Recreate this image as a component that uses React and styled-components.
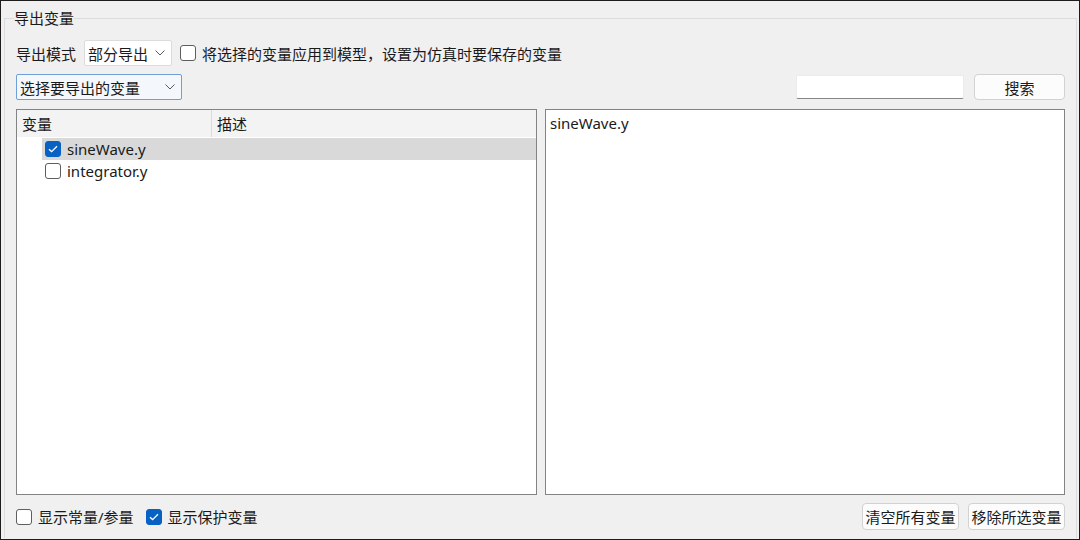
import React from "react";
import styled, { createGlobalStyle } from "styled-components";

const Global = createGlobalStyle`
  html, body { margin: 0; padding: 0; background: #f0f0f0; }
  * { box-sizing: border-box; }
  body {
    font-family: "Segoe UI", "Noto Sans", "Noto Sans CJK SC", sans-serif;
    font-size: 15px;
    color: #1a1a1a;
  }
`;

const Frame = styled.div`
  width: 1080px;
  height: 540px;
  border: 1px solid #1c1c1c;
  background: #f0f0f0;
  padding: 7px 2px 1px 3px;
  display: flex;
`;

const GroupBox = styled.fieldset`
  flex: 1;
  margin: 0;
  border: 1px solid #dcdcdc;
  border-bottom: none;
  padding: 11px 11px 8px 11px;
  display: flex;
  flex-direction: column;
  min-width: 0;
`;

const Legend = styled.legend`
  padding: 0;
  margin-left: -2px;
  line-height: 20px;
  font-size: 15px;
`;

const Row = styled.div`
  display: flex;
  align-items: center;
  height: ${(p) => p.$h || 26}px;
  margin-top: ${(p) => p.$mt || 0}px;
`;

const Label = styled.span`
  white-space: nowrap;
  margin-right: ${(p) => p.$mr || 0}px;
`;

const Combo = styled.div`
  width: ${(p) => p.$w}px;
  height: 26px;
  display: flex;
  align-items: center;
  justify-content: space-between;
  padding: 0 6px 0 3px;
  background: ${(p) => (p.$focus ? "#f4f7fc" : "#ffffff")};
  border: 1px solid ${(p) => (p.$focus ? "#6f9fd8" : "#dcdcdc")};
  border-radius: 2px;
  white-space: nowrap;
`;

const Chevron = () => (
  <svg width="10" height="6" viewBox="0 0 10 6">
    <path d="M0.5 0.5 L5 5 L9.5 0.5" fill="none" stroke="#5a5a5a" strokeWidth="1" />
  </svg>
);

const Box = styled.span`
  width: 16px;
  height: 16px;
  flex: none;
  border-radius: 3px;
  display: inline-flex;
  align-items: center;
  justify-content: center;
  background: ${(p) => (p.$checked ? "#0862c4" : "#ffffff")};
  border: 1px solid ${(p) => (p.$checked ? "#0862c4" : "#5e5e5e")};
`;

const Check = ({ checked }) => (
  <Box $checked={checked}>
    {checked && (
      <svg width="10" height="8" viewBox="0 0 10 8">
        <path d="M1 4.2 L3.6 6.6 L9 1.2" fill="none" stroke="#fff" strokeWidth="1.3" />
      </svg>
    )}
  </Box>
);

const Spacer = styled.div`
  flex: 1;
`;

const SearchInput = styled.div`
  width: 168px;
  height: 24px;
  background: #fff;
  border: 1px solid #ebebeb;
  border-bottom: 1px solid #868686;
  border-radius: 2px;
  margin-right: 10px;
`;

const Button = styled.div`
  width: ${(p) => p.$w}px;
  height: ${(p) => p.$h || 26}px;
  display: flex;
  align-items: center;
  justify-content: center;
  background: #fcfcfc;
  border: 1px solid #d2d2d2;
  border-radius: 4px;
  white-space: nowrap;
  margin-left: ${(p) => p.$ml || 0}px;
`;

const Panels = styled.div`
  flex: 1;
  display: flex;
  gap: 8px;
  margin-top: 9px;
  min-height: 0;
`;

const Panel = styled.div`
  width: ${(p) => p.$w}px;
  background: #fff;
  border: 1px solid #838383;
  display: flex;
  flex-direction: column;
`;

const Header = styled.div`
  height: 27px;
  display: flex;
  background: #f3f3f3;
`;

const HeadCell = styled.div`
  width: ${(p) => (p.$w ? p.$w + "px" : "auto")};
  flex: ${(p) => (p.$w ? "none" : 1)};
  display: flex;
  align-items: center;
  padding-left: 5px;
  border-right: ${(p) => (p.$w ? "1px solid #dadada" : "none")};
`;

const TreeRow = styled.div`
  height: 22px;
  display: flex;
  align-items: center;
  margin-left: 25px;
  padding-left: 3px;
  gap: 6px;
  background: ${(p) => (p.$sel ? "#d9d9d9" : "transparent")};
  margin-top: ${(p) => p.$mt || 0}px;
`;

const ListItem = styled.div`
  padding: 3px 4px;
  line-height: 20px;
`;

const Bottom = styled.div`
  display: flex;
  align-items: center;
  height: 27px;
  margin-top: 8px;
`;

const CheckLabel = styled.label`
  display: flex;
  align-items: center;
  gap: 6px;
  margin-left: ${(p) => p.$ml || 0}px;
  margin-right: ${(p) => p.$mr || 0}px;
  white-space: nowrap;
`;

export default function App() {
  return (
    <>
      <Global />
      <Frame>
        <GroupBox>
          <Legend>导出变量</Legend>
          <Row $mt={1}>
            <Label $mr={8}>导出模式</Label>
            <Combo $w={88}>
              <span>部分导出</span>
              <Chevron />
            </Combo>
            <CheckLabel $ml={8}>
              <Check />
              <span>将选择的变量应用到模型，设置为仿真时要保存的变量</span>
            </CheckLabel>
          </Row>
          <Row $mt={8}>
            <Combo $w={166} $focus>
              <span>选择要导出的变量</span>
              <Chevron />
            </Combo>
            <Spacer />
            <SearchInput />
            <Button $w={91}>搜索</Button>
          </Row>
          <Panels>
            <Panel $w={522}>
              <Header>
                <HeadCell $w={195}>变量</HeadCell>
                <HeadCell>描述</HeadCell>
              </Header>
              <TreeRow $sel $mt={1}>
                <Check checked />
                <span>sineWave.y</span>
              </TreeRow>
              <TreeRow>
                <Check />
                <span>integrator.y</span>
              </TreeRow>
            </Panel>
            <Panel $w={521}>
              <ListItem>sineWave.y</ListItem>
            </Panel>
          </Panels>
          <Bottom>
            <CheckLabel $mr={12}>
              <Check />
              <span>显示常量/参量</span>
            </CheckLabel>
            <CheckLabel>
              <Check checked />
              <span>显示保护变量</span>
            </CheckLabel>
            <Spacer />
            <Button $w={97} $h={27}>清空所有变量</Button>
            <Button $w={97} $h={27} $ml={9}>移除所选变量</Button>
          </Bottom>
        </GroupBox>
      </Frame>
    </>
  );
}
